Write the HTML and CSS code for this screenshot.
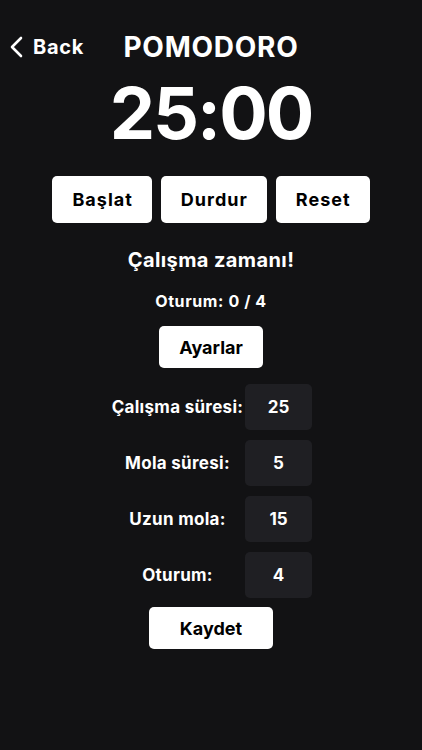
FILE: index.html
```html
<!DOCTYPE html>
<html>
	<head>
		<meta charset="UTF-8">
		<meta name="viewport" content="width=device-width, initial-scale=1.0">
		<title>Pomodoro</title>
		<link rel="stylesheet" href="styles.css">
	</head>
	<body>
		<div class="top">
			<a class="back" href="#">
				<svg width="14" height="22" viewBox="0 0 14 22"><path d="M12 2 L3 11 L12 20" fill="none" stroke="#fff" stroke-width="2.6" stroke-linecap="round" stroke-linejoin="round"/></svg>
				<span>Back</span>
			</a>
			<h1>POMODORO</h1>
			<div></div>
		</div>
		<div class="time">25:00</div>
		<div class="controls">
			<button class="btn">Başlat</button>
			<button class="btn">Durdur</button>
			<button class="btn">Reset</button>
		</div>
		<p class="state">Çalışma zamanı!</p>
		<p class="session">Oturum: 0 / 4</p>
		<button class="btn small">Ayarlar</button>
		<div class="settings">
			<div class="row">
				<label>Çalışma süresi:</label>
				<div class="num">25</div>
			</div>
			<div class="row">
				<label>Mola süresi:</label>
				<div class="num">5</div>
			</div>
			<div class="row">
				<label>Uzun mola:</label>
				<div class="num">15</div>
			</div>
			<div class="row">
				<label>Oturum:</label>
				<div class="num">4</div>
			</div>
		</div>
		<button class="btn small save">Kaydet</button>
	</body>
</html>
```

FILE: styles.css
```css
*{
	margin: 0;
	padding: 0;
	box-sizing: border-box;
}
body{
	background: rgb(18,18,20);
	color: #fff;
	font-family: Inter, "Noto Sans", sans-serif;
	font-weight: 700;
	display: flex;
	flex-direction: column;
	align-items: center;
	height: 750px;
	overflow: hidden;
}
.top{
	width: 100%;
	display: grid;
	grid-template-columns: 1fr auto 1fr;
	align-items: center;
	height: 40px;
	margin-top: 27px;
}
.back{
	display: flex;
	align-items: center;
	color: #fff;
	text-decoration: none;
	font-size: 20px;
	letter-spacing: 0.75px;
	padding-left: 9px;
}
.back svg{
	margin-right: 10px;
}
.top h1{
	font-size: 28px;
	font-weight: 700;
	letter-spacing: 0.75px;
}
.time{
	font-size: 72px;
	line-height: 80px;
	letter-spacing: -2px;
	margin-top: 6px;
}
.controls{
	display: flex;
	gap: 9px;
	margin-top: 23px;
}
.btn{
	background: #fff;
	color: #000;
	border: none;
	border-radius: 5px;
	font-family: inherit;
	font-weight: 700;
	font-size: 18px;
	letter-spacing: 1px;
	height: 47px;
	padding: 0 19px 0 20px;
}
.state{
	font-size: 20px;
	letter-spacing: 0.4px;
	margin-top: 25px;
}
.session{
	font-size: 16px;
	letter-spacing: 0.6px;
	margin-top: 19px;
}
.small{
	height: 42px;
	letter-spacing: 0;
	padding: 0 20px;
	margin-top: 15px;
}
.settings{
	margin-top: 16px;
	display: flex;
	flex-direction: column;
	gap: 10px;
}
.row{
	display: flex;
	align-items: center;
}
.row label{
	width: 135px;
	text-align: center;
	font-size: 17px;
	letter-spacing: 0.3px;
}
.num{
	width: 67px;
	height: 46px;
	background: rgb(31,31,35);
	border-radius: 5px;
	display: flex;
	align-items: center;
	justify-content: center;
	font-size: 17px;
}
.save{
	padding: 0 31px;
	margin-top: 9px;
}
```
